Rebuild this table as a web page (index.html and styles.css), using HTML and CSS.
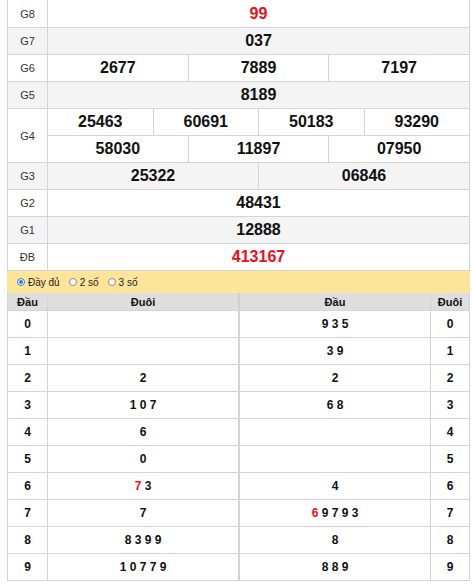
FILE: index.html
```html
<!DOCTYPE html>
<html lang="vi">
<head>
<meta charset="utf-8">
<title>Kết quả</title>
<link rel="stylesheet" href="styles.css">
</head>
<body>
<div class="wrap">
  <div class="kq">
    <div class="lbl">G8</div><div class="num red s12">99</div>
    <div class="lbl alt">G7</div><div class="num alt s12">037</div>
    <div class="lbl">G6</div><div class="num s4">2677</div><div class="num s4">7889</div><div class="num s4">7197</div>
    <div class="lbl alt">G5</div><div class="num alt s12">8189</div>
    <div class="lbl r2">G4</div><div class="num s3">25463</div><div class="num s3">60691</div><div class="num s3">50183</div><div class="num s3">93290</div>
    <div class="num s4">58030</div><div class="num s4">11897</div><div class="num s4">07950</div>
    <div class="lbl alt">G3</div><div class="num alt s6">25322</div><div class="num alt s6">06846</div>
    <div class="lbl">G2</div><div class="num s12">48431</div>
    <div class="lbl alt">G1</div><div class="num alt s12">12888</div>
    <div class="lbl">ĐB</div><div class="num red s12">413167</div>
  </div>
  <div class="opts">
    <label class="opt"><span class="radio on"></span>Đầy đủ</label>
    <label class="opt"><span class="radio"></span>2 số</label>
    <label class="opt"><span class="radio"></span>3 số</label>
  </div>
  <div class="loto">
    <div class="hd">Đầu</div><div class="hd mid">Đuôi</div><div class="hd">Đầu</div><div class="hd">Đuôi</div>

    <div class="c">0</div><div class="c mid"></div><div class="c">9 3 5</div><div class="c">0</div>
    <div class="c">1</div><div class="c mid"></div><div class="c">3 9</div><div class="c">1</div>
    <div class="c">2</div><div class="c mid">2</div><div class="c">2</div><div class="c">2</div>
    <div class="c">3</div><div class="c mid">1 0 7</div><div class="c">6 8</div><div class="c">3</div>
    <div class="c">4</div><div class="c mid">6</div><div class="c"></div><div class="c">4</div>
    <div class="c">5</div><div class="c mid">0</div><div class="c"></div><div class="c">5</div>
    <div class="c">6</div><div class="c mid"><span><span class="red">7</span> 3</span></div><div class="c">4</div><div class="c">6</div>
    <div class="c">7</div><div class="c mid">7</div><div class="c"><span><span class="red">6</span> 9 7 9 3</span></div><div class="c">7</div>
    <div class="c">8</div><div class="c mid">8 3 9 9</div><div class="c">8</div><div class="c">8</div>
    <div class="c">9</div><div class="c mid">1 0 7 7 9</div><div class="c">8 8 9</div><div class="c">9</div>
  </div>
</div>
</body>
</html>
```

FILE: styles.css
```css
* { box-sizing: border-box; }

body {
  margin: 0;
  background: #fff;
  font-family: "Liberation Sans", Arial, sans-serif;
  color: #111;
}

.wrap {
  width: 463px;
  margin: -1px 0 0 7px;
}

.kq {
  display: grid;
  grid-template-columns: 39px repeat(12, 1fr);
  grid-template-rows: 27px;
  grid-auto-rows: 26px;
  gap: 1px;
  background: #d4d4d4;
  border: 1px solid #d4d4d4;
}

.kq > div {
  background: #fff;
  display: flex;
  align-items: center;
  justify-content: center;
}

.kq > .alt { background: #f4f4f4; }

.lbl {
  font-size: 11px;
  color: #333;
}

.r2 { grid-row: span 2; }

.num {
  font-size: 16px;
  font-weight: bold;
  color: #111;
}

.s12 { grid-column: span 12; }
.s6 { grid-column: span 6; }
.s4 { grid-column: span 4; }
.s3 { grid-column: span 3; }

.red { color: #e8101a; }
.kq > .red { color: #e8101a; }

.opts {
  height: 22px;
  background: #ffe599;
  display: flex;
  align-items: center;
  gap: 9px;
  padding-left: 10px;
  font-size: 10px;
  color: #222;
}

.opt {
  display: flex;
  align-items: center;
  gap: 3px;
}

.radio {
  width: 8px;
  height: 8px;
  border-radius: 50%;
  border: 1px solid #8a8a8a;
  background: #fff;
  position: relative;
}

.radio.on {
  border-color: #2f7fd6;
  background: #fff;
}

.radio.on::after {
  content: "";
  position: absolute;
  inset: 1px;
  border-radius: 50%;
  background: #2f7fd6;
}

.loto {
  display: grid;
  grid-template-columns: 39px 191px 190px 1fr;
  grid-template-rows: 17px;
  grid-auto-rows: 26px;
  gap: 1px;
  background: #d4d4d4;
  border: 1px solid #d4d4d4;
  border-top: 0;
}

.loto > div {
  background: #fff;
  display: flex;
  align-items: center;
  justify-content: center;
  font-size: 12px;
  font-weight: bold;
  color: #111;
}

.loto > .hd {
  background: #dedede;
  font-size: 11px;
}

.loto > .mid { border-right: 1px solid #d4d4d4; }
.loto > .hd.mid { border-right: 1px solid #cacaca; }
```
